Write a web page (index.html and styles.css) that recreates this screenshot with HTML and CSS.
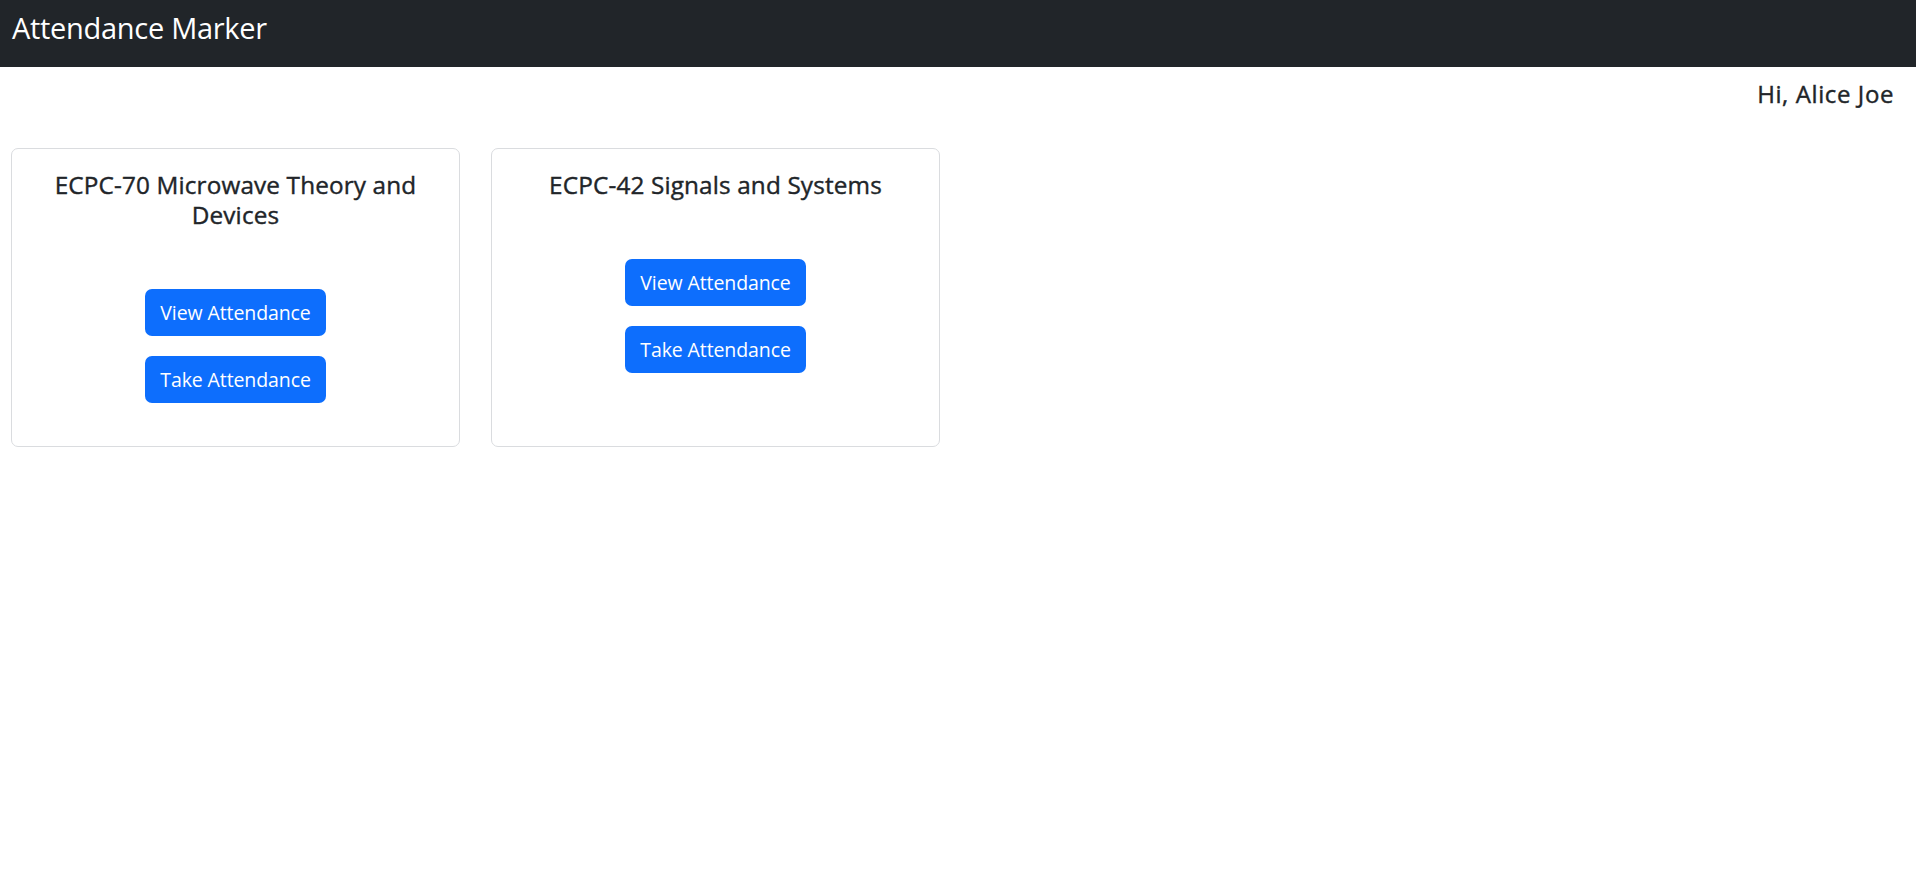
FILE: index.html
```html
<!DOCTYPE html>
<html lang="en">
<head>
<meta charset="utf-8">
<title>Attendance Marker</title>
<link rel="stylesheet" href="styles.css">
</head>
<body>
<nav class="navbar">
  <span class="brand">Attendance Marker</span>
</nav>
<div class="greeting-row">
  <h5 class="greeting">Hi, Alice Joe</h5>
</div>
<main class="course-list">
  <section class="card">
    <h5 class="card-title">ECPC-70 Microwave Theory and Devices</h5>
    <div class="actions">
      <button class="btn">View Attendance</button>
      <button class="btn">Take Attendance</button>
    </div>
  </section>
  <section class="card">
    <h5 class="card-title">ECPC-42 Signals and Systems</h5>
    <div class="actions">
      <button class="btn">View Attendance</button>
      <button class="btn">Take Attendance</button>
    </div>
  </section>
</main>
</body>
</html>
```
FILE: styles.css
```css
* { box-sizing: border-box; }
body {
  margin: 0;
  font-family: "Open Sans", "Noto Sans", sans-serif;
  font-size: 20px;
  color: #212529;
  background: #fff;
}
.navbar {
  height: 67px;
  background: #212529;
  padding: 10px 12px 0;
  display: flex;
  align-items: flex-start;
}
.brand {
  color: #fff;
  font-size: 29px;
  line-height: 36px;
  letter-spacing: -0.3px;
}
.greeting-row {
  display: flex;
  justify-content: flex-end;
  padding: 12px 22px 0;
}
.greeting {
  margin: 0;
  font-size: 24px;
  line-height: 30px;
  font-weight: 400;
  letter-spacing: 0.6px;
  -webkit-text-stroke: 0.4px currentColor;
}
.course-list {
  display: flex;
  gap: 31px;
  padding: 39px 0 0 11px;
  align-items: stretch;
}
.card {
  width: 449px;
  border: 1px solid #dadcdf;
  border-radius: 7px;
  padding: 21px 12px 43px;
  display: flex;
  flex-direction: column;
  align-items: center;
}
.card-title {
  margin: 0 0 59px;
  font-size: 24.3px;
  line-height: 30px;
  font-weight: 400;
  text-align: center;
  letter-spacing: 0.15px;
  -webkit-text-stroke: 0.4px currentColor;
  padding: 0 10px;
}
.actions {
  display: flex;
  flex-direction: column;
  align-items: center;
  gap: 20px;
}
.btn {
  font-family: inherit;
  font-size: 19.5px;
  line-height: 30px;
  padding: 8.5px 15px;
  color: #fff;
  background: #0d6efd;
  border: 0;
  border-radius: 7px;
  letter-spacing: -0.1px;
  cursor: pointer;
}
```
